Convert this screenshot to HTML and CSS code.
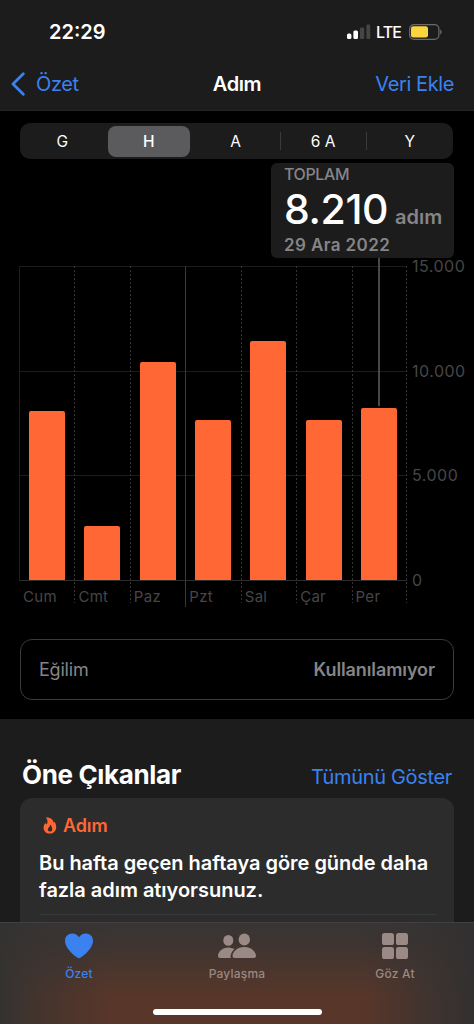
FILE: index.html
```html
<!DOCTYPE html>
<html lang="tr">
<head>
    <meta charset="UTF-8">
    <meta name="viewport" content="width=device-width, initial-scale=1.0">
    <title>Adım</title>
    <link rel="stylesheet" href="styles.css">
</head>
<body>

    <header class="header">
        <div class="status-bar">
            <span class="time">22:29</span>
            <div class="status-icons">
                <svg class="signal" width="24" height="16" viewBox="0 0 24 16">
                    <rect x="0" y="9.5" width="4.4" height="5.5" rx="1.5" fill="#fff"/>
                    <rect x="6.4" y="6.5" width="4.6" height="8.5" rx="1.5" fill="#fff"/>
                    <rect x="13" y="3.500" width="4.2" height="11.500" rx="1.2" fill="#454547"/>
                    <rect x="19.4" y="0.500" width="3.800" height="14.500" rx="1.2" fill="#454547"/>
                </svg>
                <span class="network">LTE</span>
                <svg class="battery" width="33" height="16" viewBox="0 0 33 16">
                    <rect x="0.6" y="0.6" width="29.3" height="14.8" rx="4.4" fill="none" stroke="#6b6b6c" stroke-width="1.2"/>
                    <rect x="2" y="2.2" width="17" height="11.4" rx="2.4" fill="#fad53e"/>
                    <path d="M31.2 5.6c1.9.8 1.9 4 0 4.8z" fill="#6b6b6c"/>
                </svg>
            </div>
        </div>
        <nav class="nav-bar">
            <a class="back">
                <svg width="14" height="24" viewBox="0 0 14 24">
                    <path d="M12.3 1.8 2 12l10.3 10.2" fill="none" stroke="#3b82f0" stroke-width="2.8" stroke-linecap="round" stroke-linejoin="round"/>
                </svg>
                <span class="back-text">Özet</span>
            </a>
            <h1>Adım</h1>
            <a class="add">Veri Ekle</a>
        </nav>
    </header>

    <main class="content">
        <section class="chart-section">
            <div class="segments">
                <span class="segment">G</span>
                <span class="segment active">H</span>
                <span class="segment">A</span>
                <span class="segment divided">6 A</span>
                <span class="segment divided">Y</span>
            </div>

            <div class="chart">
                <div class="plot">
                    <div class="day first"><div class="bar-area"><div class="bar" style="height: 169px"></div></div><span>Cum</span></div>
                    <div class="day"><div class="bar-area"><div class="bar" style="height: 54px"></div></div><span>Cmt</span></div>
                    <div class="day"><div class="bar-area"><div class="bar" style="height: 218.5px"></div></div><span>Paz</span></div>
                    <div class="day week-start"><div class="bar-area"><div class="bar" style="height: 160px"></div></div><span>Pzt</span></div>
                    <div class="day"><div class="bar-area"><div class="bar" style="height: 239.5px"></div></div><span>Sal</span></div>
                    <div class="day"><div class="bar-area"><div class="bar" style="height: 160px"></div></div><span>Çar</span></div>
                    <div class="day last"><div class="bar-area"><div class="bar" style="height: 172px"></div></div><span>Per</span></div>
                </div>
                <div class="axis">
                    <span>15.000</span>
                    <span>10.000</span>
                    <span>5.000</span>
                    <span>0</span>
                </div>
                <div class="marker"></div>
                <div class="callout">
                    <div class="callout-label">TOPLAM</div>
                    <div class="callout-value"><span class="count">8.210</span><span class="unit">adım</span></div>
                    <div class="callout-date">29 Ara 2022</div>
                </div>
            </div>

            <div class="trend">
                <span class="trend-name">Eğilim</span>
                <span class="trend-value">Kullanılamıyor</span>
            </div>
        </section>

        <section class="highlights">
            <div class="highlights-head">
                <h2>Öne Çıkanlar</h2>
                <a class="show-all">Tümünü Göster</a>
            </div>
            <div class="card">
                <div class="card-title">
                    <svg width="14" height="17" viewBox="0 0 14 17">
                        <path fill-rule="evenodd" d="M2.800.6C7.400.3 10.300 2.500 10.500 5.700c.3-.3.5-.7.600-1.200C12.600 6 13.200 8 13.200 10c0 4-2.700 6.600-6.400 6.600S.6 14.100.6 10.700c0-2.100.8-3.500 1.700-4.600.4.700.800 1.100 1.500 1.400C5 5 4.700 2.400 2.800.6zM7 7.600c0 1.500-.5 2.200-1.200 3-.6.700-1 1.200-1 2 0 1.200.900 2 2.200 2s2.200-.9 2.200-2.300c0-1.800-.7-3.500-2.200-4.700z" fill="#ff6734"/>
                    </svg>
                    <span>Adım</span>
                </div>
                <p class="card-text">Bu hafta geçen haftaya göre günde daha<br>fazla adım atıyorsunuz.</p>
                <div class="card-line"></div>
            </div>
        </section>
    </main>

    <footer class="tab-bar">
        <div class="tabs">
            <a class="tab active">
                <svg width="28" height="26" viewBox="0 0 28 26">
                    <path d="M14 25.300C12.500 25.300 0 16.500 0 7.800 0 3.300 3.100.4 7.200.4c3 0 5.400 1.500 6.800 3.900C15.400 1.900 17.800.4 20.800.4 24.900.4 28 3.300 28 7.800c0 8.700-12.500 17.500-14 17.500z" fill="#3b82f0"/>
                </svg>
                <span>Özet</span>
            </a>
            <a class="tab">
                <svg width="38" height="26" viewBox="0 0 38 26">
                    <g fill="#9a8984">
                        <ellipse cx="10.300" cy="7.400" rx="5" ry="5.400"/>
                        <path d="M2.300 25C.8 25 0 24.300 0 23c0-3.700 4-8.500 10.300-8.500 2.400 0 4.500.7 6.100 1.800-2.300 1.900-3.900 4.700-3.800 7.400 0 .5.100.9.300 1.300z"/>
                        <ellipse cx="26.300" cy="6.500" rx="5.700" ry="6.100"/>
                        <path d="M16.900 25c-1.700 0-2.400-.8-2.400-2 0-3.700 4.500-8.900 11.800-8.900S38 19.300 38 23c0 1.200-.7 2-2.400 2z"/>
                    </g>
                </svg>
                <span>Paylaşma</span>
            </a>
            <a class="tab">
                <svg width="26" height="26" viewBox="0 0 26 26">
                    <g fill="#9a8984">
                        <rect x="0" y="0" width="12" height="12" rx="2.600"/>
                        <rect x="14" y="0" width="12" height="12" rx="2.600"/>
                        <rect x="0" y="14" width="12" height="12" rx="2.600"/>
                        <rect x="14" y="14" width="12" height="12" rx="2.600"/>
                    </g>
                </svg>
                <span>Göz At</span>
            </a>
        </div>
        <div class="home-indicator"></div>
    </footer>

</body>
</html>
```
FILE: styles.css
```css
* {
    box-sizing: border-box;
}

body {
    font-family: Inter, "Liberation Sans", sans-serif;
    margin: 0;
    height: 1024px;
    display: flex;
    flex-direction: column;
    background-color: #1c1c1c;
    color: #fff;
    overflow: hidden;
    white-space: nowrap;
}

h1, h2, p {
    margin: 0;
}

.header {
    height: 111px;
    flex: none;
    background-color: #1c1c1c;
    border-bottom: 1px solid #242424;
}

.status-bar {
    display: flex;
    justify-content: space-between;
    align-items: center;
    height: 64px;
    padding: 0 32px 0 49px;
}

.time {
    font-size: 20px;
    font-weight: 600;
    line-height: 24px;
}

.status-icons {
    display: flex;
    align-items: center;
}

.network {
    margin: 0 8px 0 5px;
    font-size: 16px;
    font-weight: 500;
    letter-spacing: -0.9px;
}

.nav-bar {
    display: grid;
    grid-template-columns: 1fr auto 1fr;
    align-items: center;
    height: 40px;
    padding: 0 20px 0 11px;
    font-size: 20px;
    letter-spacing: -0.400px;
}

.back {
    display: flex;
    align-items: center;
    gap: 11px;
    color: #3b82f0;
}

.nav-bar h1 {
    font-size: 20px;
    font-weight: 600;
    padding-left: 9px;
}

.add {
    text-align: right;
    color: #3b82f0;
}

.content {
    flex: 1;
    min-height: 0;
    overflow: hidden;
}

.chart-section {
    height: 608px;
    padding: 12px 20px 0 20px;
    background-color: #000;
}

.segments {
    display: grid;
    grid-template-columns: repeat(5, 1fr);
    width: 433px;
    height: 36px;
    padding: 2.500px 0;
    border-radius: 10px;
    background-color: #1c1c1d;
    font-size: 15.500px;
}

.segment {
    display: flex;
    align-items: center;
    justify-content: center;
    padding-right: 2px;
}

.segment.active {
    margin: 0 3px 0 1px;
    padding: 0;
    border-radius: 8px;
    background-color: #5b5b5e;
    font-weight: 500;
}

.segment.divided {
    padding: 0;
    background: linear-gradient(#3b3b3d, #3b3b3d) 0 center / 1px 18px no-repeat;
}

.chart {
    position: relative;
    display: flex;
    height: 339px;
    margin: 107px -20px 0 -1px;
    color: #464648;
    font-size: 16px;
}

.plot {
    display: grid;
    grid-template-columns: repeat(7, 1fr);
    width: 388px;
    background:
        linear-gradient(#1c1c1c, #1c1c1c) 0 0 / 100% 1px no-repeat,
        linear-gradient(#1c1c1c, #1c1c1c) 0 105px / 100% 1px no-repeat,
        linear-gradient(#1c1c1c, #1c1c1c) 0 209px / 100% 1px no-repeat,
        linear-gradient(#2c2c2c, #2c2c2c) 0 314px / 100% 1px no-repeat;
}

.day {
    background: repeating-linear-gradient(#343434 0 2px, transparent 2px 4px) 0 0 / 1px 337px no-repeat;
}

.day.first {
    background: linear-gradient(#1e1e1e, #1e1e1e) 0 0 / 1px 314px no-repeat;
}

.day.week-start {
    background: linear-gradient(#3a3a3a, #3a3a3a) 0 0 / 1px 100% no-repeat;
}

.day.last {
    background:
        repeating-linear-gradient(#343434 0 2px, transparent 2px 4px) 0 0 / 1px 337px no-repeat,
        repeating-linear-gradient(#343434 0 2px, transparent 2px 4px) 100% 0 / 1px 337px no-repeat;
}

.bar-area {
    display: flex;
    align-items: flex-end;
    justify-content: center;
    height: 314px;
}

.bar {
    width: 36px;
    border-radius: 2px 2px 0 0;
    background-color: #ff6734;
}

.day span {
    display: block;
    padding: 7px 0 0 4px;
    font-size: 15px;
    line-height: 20px;
    letter-spacing: 0.300px;
}

.axis {
    display: flex;
    flex-direction: column;
    gap: 84.700px;
    margin-top: -10px;
    padding-left: 5px;
    line-height: 20px;
    letter-spacing: 0.500px;
}

.marker {
    position: absolute;
    top: -8px;
    left: 359px;
    width: 2px;
    height: 148px;
    background-color: #48484a;
}

.callout {
    position: absolute;
    top: -103px;
    left: 252px;
    width: 183px;
    height: 95px;
    padding: 1px 0 0 13px;
    border-radius: 6px;
    background-color: #1c1c1d;
    color: #858587;
    font-weight: 600;
}

.callout-label {
    font-size: 16px;
    font-weight: 500;
    line-height: 21px;
    letter-spacing: -0.400px;
}

.callout-value {
    display: flex;
    align-items: baseline;
    gap: 7px;
    height: 49px;
    line-height: 48px;
}

.count {
    color: #fff;
    font-size: 41px;
    font-weight: 500;
    letter-spacing: -0.400px;
}

.unit {
    font-size: 20px;
}

.callout-date {
    font-size: 17px;
    line-height: 22px;
    letter-spacing: 0.400px;
}

.trend {
    display: flex;
    align-items: center;
    justify-content: space-between;
    height: 61px;
    margin-top: 34px;
    padding: 0 18px;
    border: 1px solid #3a3a3b;
    border-radius: 12px;
    color: #858587;
    font-size: 18px;
}

.trend-name {
    letter-spacing: -0.200px;
}

.trend-value {
    font-weight: 600;
    letter-spacing: -0.100px;
}

.highlights {
    padding: 37px 20px 0;
}

.highlights-head {
    display: flex;
    align-items: baseline;
    justify-content: space-between;
    height: 42px;
    padding: 0 2px;
}

.highlights-head h2 {
    font-size: 26px;
    font-weight: 700;
    line-height: 38px;
    letter-spacing: -0.350px;
}

.show-all {
    color: #3b82f0;
    font-size: 20px;
    letter-spacing: -0.330px;
}

.card {
    height: 140px;
    padding: 16px 19px 0;
    border-radius: 12px;
    background-color: #2c2c2c;
}

.card-title {
    display: flex;
    align-items: center;
    gap: 6px;
    height: 22px;
    padding-left: 4px;
    color: #ff6734;
    font-size: 18px;
    font-weight: 600;
    letter-spacing: -0.100px;
}

.card-text {
    margin-top: 14px;
    font-size: 20px;
    font-weight: 600;
    line-height: 27px;
    letter-spacing: -0.030px;
}

.card-line {
    height: 1px;
    margin: 10px -2px 0 0;
    background-color: #373737;
}

.tab-bar {
    flex: none;
    height: 102px;
    border-top: 1px solid #414141;
    background:
        linear-gradient(90deg, #343231 0, rgba(52, 50, 49, 0.550) 40px, rgba(52, 50, 49, 0) 110px, rgba(52, 50, 49, 0) 365px, rgba(52, 50, 49, 0.650) 425px, #323030 474px),
        linear-gradient(#383534 0, #3d3431 20px, #4d362d 50px, #583629 75px, #583629 100%);
}

.tabs {
    display: grid;
    grid-template-columns: repeat(3, 158px);
    height: 86px;
    padding-top: 10px;
}

.tab {
    display: flex;
    flex-direction: column;
    align-items: center;
    gap: 6px;
    color: #9a8984;
    font-size: 12px;
    font-weight: 500;
    line-height: 17px;
    letter-spacing: 0.200px;
}

.tab.active {
    color: #3b82f0;
}

.home-indicator {
    width: 169px;
    height: 6px;
    margin: 0 auto;
    border-radius: 3px;
    background-color: #fff;
}
```
